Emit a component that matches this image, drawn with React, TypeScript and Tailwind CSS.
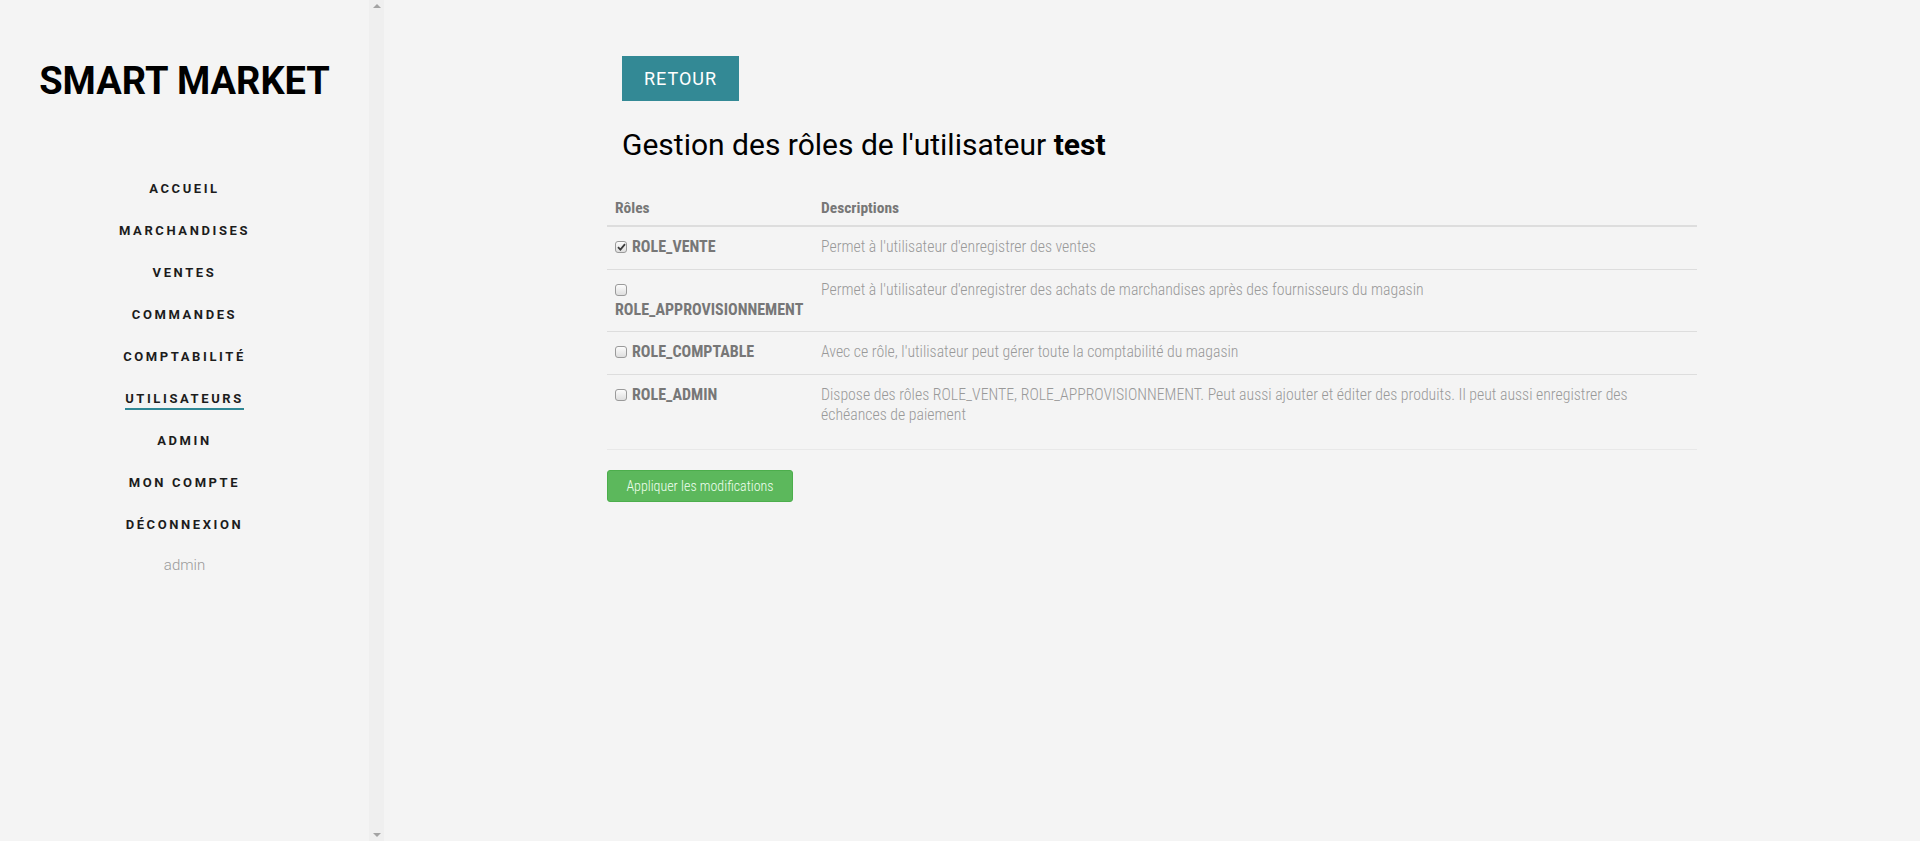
import React from 'react';

const roles = [
  {
    name: 'ROLE_VENTE',
    checked: true,
    wrap: false,
    height: 'h-[43px]',
    lines: ["Permet à l'utilisateur d'enregistrer des ventes"],
  },
  {
    name: 'ROLE_APPROVISIONNEMENT',
    checked: false,
    wrap: true,
    height: 'h-[62px]',
    lines: ["Permet à l'utilisateur d'enregistrer des achats de marchandises après des fournisseurs du magasin"],
  },
  {
    name: 'ROLE_COMPTABLE',
    checked: false,
    wrap: false,
    height: 'h-[43px]',
    lines: ["Avec ce rôle, l'utilisateur peut gérer toute la comptabilité du magasin"],
  },
  {
    name: 'ROLE_ADMIN',
    checked: false,
    wrap: false,
    height: 'h-[75px]',
    lines: [
      'Dispose des rôles ROLE_VENTE, ROLE_APPROVISIONNEMENT. Peut aussi ajouter et éditer des produits. Il peut aussi enregistrer des',
      'échéances de paiement',
    ],
  },
];

const navItems = [
  'ACCUEIL',
  'MARCHANDISES',
  'VENTES',
  'COMMANDES',
  'COMPTABILITÉ',
  'UTILISATEURS',
  'ADMIN',
  'MON COMPTE',
  'DÉCONNEXION',
];

const Checkbox: React.FC<{ checked: boolean }> = ({ checked }) => (
  <span className="inline-flex items-center justify-center w-[12px] h-[12px] rounded-[3px] border border-[#9a9a9a] bg-gradient-to-b from-[#fcfcfc] to-[#dedede] shrink-0">
    {checked && (
      <svg width="9" height="8" viewBox="0 0 9 8">
        <path d="M1 4.2 L3.4 6.6 L8 1.2" fill="none" stroke="#3c3c3c" strokeWidth="1.8" />
      </svg>
    )}
  </span>
);

const Sidebar: React.FC = () => (
  <aside className="flex h-[841px] shrink-0">
    <div className="w-[369px] flex flex-col items-center font-['Roboto',sans-serif]">
      <h1 className="mt-[59px] h-[44px] leading-[44px] text-[38px] font-bold text-black">SMART MARKET</h1>
      <nav className="mt-[66px] flex flex-col items-center">
        {navItems.map((item) => {
          const active = item === 'UTILISATEURS';
          return (
            <div key={item} className="h-[42px] flex items-center justify-center">
              <span
                className={`inline-block leading-[15px] pb-[2px] border-b-2 text-[13px] font-bold tracking-[2.6px] text-[#1c1c1c] ${
                  active ? 'border-[#2f8795]' : 'border-transparent'
                }`}
              >
                {item}
              </span>
            </div>
          );
        })}
        <div className="h-[36px] flex items-center justify-center text-[15px] font-light text-[#9a9a9a]">admin</div>
      </nav>
    </div>
    {/* scrollbar */}
    <div className="w-[15px] h-full bg-[#efefef] flex flex-col items-center justify-between py-[4px]">
      <span className="w-0 h-0 border-x-[4px] border-x-transparent border-b-[4px] border-b-[#a3a3a3]" />
      <span className="w-0 h-0 border-x-[4px] border-x-transparent border-t-[4px] border-t-[#a3a3a3]" />
    </div>
  </aside>
);

export default function App() {
  return (
    <div className="flex w-full h-[841px] bg-[#f4f4f4] overflow-hidden">
      <Sidebar />
      <main className="flex-1 pl-[223px] pt-[56px]">
        <button className="ml-[15px] w-[117px] h-[45px] bg-[#338995] text-white text-[18px] tracking-[1px] font-['Roboto',sans-serif]">
          RETOUR
        </button>
        <h2 className="ml-[15px] mt-[27px] leading-[33px] text-[30px] text-black font-['Roboto',sans-serif]">
          Gestion des rôles de l'utilisateur <b className="font-bold">test</b>
        </h2>

        <div className="mt-[29px] w-[1090px] font-['Roboto_Condensed','Liberation_Sans_Narrow',sans-serif]">
          <div className="grid grid-cols-[206px_1fr] h-[37px] border-b-2 border-[#dddddd] pt-[8px] leading-[20px] text-[15.5px] font-bold text-[#777777]">
            <div className="px-[8px]">Rôles</div>
            <div className="px-[8px]">Descriptions</div>
          </div>
          {roles.map((r, i) => (
            <div
              key={r.name}
              className={`grid grid-cols-[206px_1fr] ${r.height} border-b ${
                i === roles.length - 1 ? 'border-[#e8e8e8]' : 'border-[#dddddd]'
              } pt-[10px] leading-[20px]`}
            >
              <div className="px-[8px] text-[16px]">
                {r.wrap ? (
                  <>
                    <div className="h-[20px] flex items-center">
                      <Checkbox checked={r.checked} />
                    </div>
                    <div className="font-bold text-[#777777]">{r.name}</div>
                  </>
                ) : (
                  <div className="flex items-center gap-[5px] font-bold text-[#777777]">
                    <Checkbox checked={r.checked} />
                    <span>{r.name}</span>
                  </div>
                )}
              </div>
              <div className="px-[8px] text-[15.8px] font-light text-[#999999]">
                {r.lines.map((l) => (
                  <div key={l} className="whitespace-nowrap">
                    {l}
                  </div>
                ))}
              </div>
            </div>
          ))}
        </div>

        <button className="mt-[20px] w-[186px] h-[32px] rounded-[3px] border border-[#4cae4c] bg-[#5cb85c] text-[14px] font-light text-[#f0fff0] font-['Roboto_Condensed','Liberation_Sans_Narrow',sans-serif]">
          Appliquer les modifications
        </button>
      </main>
    </div>
  );
}
